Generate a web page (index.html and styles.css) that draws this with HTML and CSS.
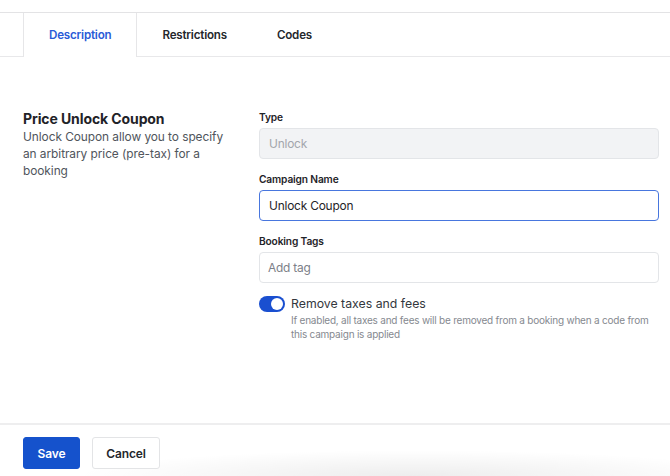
FILE: index.html
```html
<!DOCTYPE html>
<html lang="en">
<head>
<meta charset="utf-8">
<title>Price Unlock Coupon</title>
<link rel="stylesheet" href="styles.css">
</head>
<body>
<div class="page">
  <div class="topbar"></div>
  <nav class="tabs">
    <div class="tab active">Description</div>
    <div class="tab">Restrictions</div>
    <div class="tab">Codes</div>
  </nav>
  <main class="content">
    <section class="intro">
      <h2 class="intro-title">Price Unlock Coupon</h2>
      <p class="intro-text">Unlock Coupon allow you to specify an arbitrary price (pre-tax) for a booking</p>
    </section>
    <section class="form">
      <div class="field">
        <label class="label">Type</label>
        <div class="input disabled">Unlock</div>
      </div>
      <div class="field">
        <label class="label">Campaign Name</label>
        <div class="input focused">Unlock Coupon</div>
      </div>
      <div class="field">
        <label class="label">Booking Tags</label>
        <div class="input placeholder">Add tag</div>
      </div>
      <div class="toggle-row">
        <span class="toggle"><span class="knob"></span></span>
        <div class="toggle-text">
          <div class="toggle-label">Remove taxes and fees</div>
          <div class="toggle-help">If enabled, all taxes and fees will be removed from a booking when a code from this campaign is applied</div>
        </div>
      </div>
    </section>
  </main>
  <footer class="footer">
    <button class="btn primary">Save</button>
    <button class="btn secondary">Cancel</button>
  </footer>
</div>
</body>
</html>
```
FILE: styles.css
```css
* { box-sizing: border-box; }
html, body { margin: 0; padding: 0; }
body {
  font-family: Inter, "Noto Sans", "Liberation Sans", sans-serif;
  color: #1f2328;
  background: #fff;
}
.page {
  width: 670px;
  height: 476px;
  display: flex;
  flex-direction: column;
  overflow: hidden;
}
.topbar {
  height: 13px;
  border-bottom: 1px solid #e3e3e5;
  flex: none;
}
.tabs {
  display: flex;
  height: 44px;
  padding-left: 23px;
  border-bottom: 1px solid #e8e8ea;
  flex: none;
}
.tab {
  display: flex;
  align-items: center;
  padding: 0 25px 1px;
  font-size: 11.6px;
  letter-spacing: -0.2px;
  font-weight: 600;
  color: #24272c;
  height: 44px;
}
.tab.active {
  color: #2a5bd7;
  border-left: 1px solid #e6e6e8;
  border-right: 1px solid #e6e6e8;
  background: #fff;
}
.content {
  flex: 1;
  display: flex;
  gap: 24px;
  padding: 53px 11px 0 23px;
}
.intro { width: 200px; margin-right: 12px; flex: none; }
.intro-title {
  margin: 0;
  font-size: 14px;
  letter-spacing: -0.1px;
  font-weight: 700;
  line-height: 18px;
  color: #1f2328;
}
.intro-text {
  margin: 0;
  font-size: 11.9px;
  letter-spacing: -0.06px;
  line-height: 17px;
  color: #50555c;
}
.form { flex: 1; display: flex; flex-direction: column; }
.field { display: flex; flex-direction: column; margin-bottom: 13px; }
.label {
  font-size: 10.2px;
  letter-spacing: -0.15px;
  font-weight: 600;
  line-height: 14px;
  color: #1f2328;
  margin-bottom: 4px;
}
.input {
  height: 31px;
  border: 1px solid #e3e5e8;
  border-radius: 4px;
  padding: 0 9px;
  display: flex;
  align-items: center;
  font-size: 11.9px;
  letter-spacing: -0.2px;
  color: #1f2328;
  background: #fff;
}
.input.disabled { background: #f2f3f5; color: #a3a6ac; }
.input.focused { border-color: #4876de; padding-left: 9px; }
.input.placeholder { color: #7c8088; padding-left: 8px; }
.toggle-row { display: flex; gap: 6px; align-items: flex-start; }
.toggle {
  width: 26px;
  height: 16px;
  border-radius: 8px;
  background: #1a4fd0;
  position: relative;
  flex: none;
}
.knob {
  position: absolute;
  right: 2px;
  top: 2px;
  width: 12px;
  height: 12px;
  border-radius: 50%;
  background: #fff;
}
.toggle-label {
  font-size: 12.3px;
  line-height: 16px;
  color: #33373d;
}
.toggle-help {
  margin-top: 1px;
  font-size: 10px;
  letter-spacing: -0.22px;
  line-height: 14px;
  color: #85898f;
  max-width: 368px;
}
.footer {
  flex: none;
  height: 53px;
  border-top: 2px solid #eeeeef;
  padding: 12px 23px 0;
  display: flex;
  gap: 12px;
  align-items: flex-start;
  background: radial-gradient(ellipse 340px 26px at 62% 100%, rgba(0,0,0,0.07), rgba(0,0,0,0) 100%);
}
.btn {
  height: 32px;
  border-radius: 3px;
  font-family: inherit;
  font-size: 12px;
  letter-spacing: -0.1px;
  font-weight: 600;
  cursor: pointer;
}
.btn.primary {
  width: 57px;
  background: #1552cc;
  border: 1px solid #1552cc;
  color: #fff;
}
.btn.secondary {
  width: 68px;
  background: #fff;
  border: 1px solid #e3e4e6;
  color: #24272c;
}
```
